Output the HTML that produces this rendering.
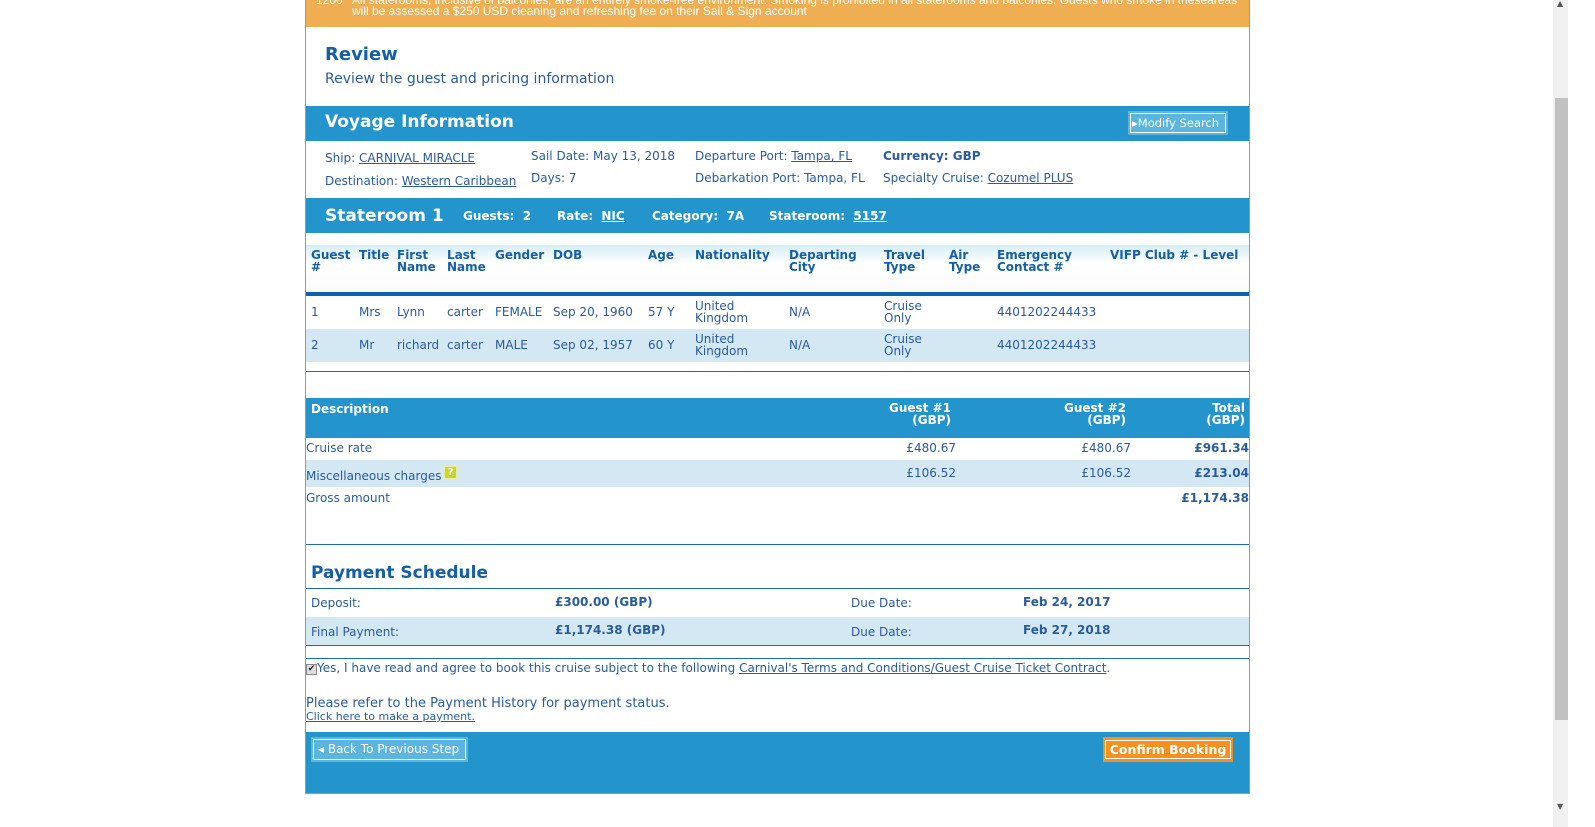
<!DOCTYPE html>
<html><head><meta charset="utf-8"><style>
*{margin:0;padding:0;box-sizing:border-box}
html,body{width:1595px;height:827px;overflow:hidden;background:#fff}
body{position:relative;font-family:"DejaVu Sans","Liberation Sans",sans-serif;font-size:12px;color:#2a5b9f}
.a{position:absolute;white-space:nowrap;line-height:14px}
.b{font-weight:bold}
.w{color:#fff}
.u{text-decoration:underline}
.bar{position:absolute;left:306px;width:943px;background:#2394cc}
.ln{position:absolute;left:306px;width:943px;height:1px;background:#1a6db5}
.lb{position:absolute;left:306px;width:943px;background:#d3e8f3}
.h{color:#155ea8;font-weight:bold;line-height:12px}
</style></head><body>
<div style="position:absolute;left:305px;top:0;width:945px;height:794px;border:1px solid #999;border-top:none"></div>
<div style="position:absolute;left:306px;top:0;width:943px;height:27px;background:#f0ae52"></div>
<div class="a w" style="left:316px;top:-5px;font-family:'Liberation Sans',sans-serif;font-size:12px;line-height:11px">1200 &nbsp; All staterooms, inclusive of balconies, are an entirely smoke-free environment. Smoking is prohibited in all staterooms and balconies. Guests who smoke in theseareas<br><span style="padding-left:36px">will be assessed a $250 USD cleaning and refreshing fee on their Sail &amp; Sign account</span></div>

<div class="a b" style="left:325px;top:45px;font-size:18px;line-height:20px;color:#155ea8">Review</div>
<div class="a" style="left:325px;top:71px;font-size:14px;line-height:16px">Review the guest and pricing information</div>

<div class="bar" style="top:106px;height:35px"></div>
<div class="a b w" style="left:325px;top:112px;font-size:17px;line-height:20px">Voyage Information</div>
<div class="a w" style="left:1128px;top:111px;width:100px;height:24px;background:#5ab5e0;padding:2px"><div style="border:1px solid #fff;height:20px;font-size:11.5px;line-height:18px;padding-left:1px;overflow:hidden">&#9656;Modify Search</div></div>

<div class="a" style="left:325px;top:151px">Ship: <span class="u">CARNIVAL MIRACLE</span></div>
<div class="a" style="left:325px;top:174px">Destination: <span class="u">Western Caribbean</span></div>
<div class="a" style="left:531px;top:149px">Sail Date: May 13, 2018</div>
<div class="a" style="left:531px;top:171px">Days: 7</div>
<div class="a" style="left:695px;top:149px">Departure Port: <span class="u">Tampa, FL</span></div>
<div class="a" style="left:695px;top:171px">Debarkation Port: Tampa, FL</div>
<div class="a b" style="left:883px;top:149px">Currency: GBP</div>
<div class="a" style="left:883px;top:171px">Specialty Cruise: <span class="u">Cozumel PLUS</span></div>

<div class="bar" style="top:198px;height:35px"></div>
<div class="a b w" style="left:325px;top:206px;font-size:17px;line-height:20px">Stateroom 1</div>
<div class="a b w" style="left:463px;top:209px">Guests: &nbsp;2</div>
<div class="a b w" style="left:557px;top:209px">Rate: &nbsp;<span class="u">NIC</span></div>
<div class="a b w" style="left:652px;top:209px">Category: &nbsp;7A</div>
<div class="a b w" style="left:769px;top:209px">Stateroom: &nbsp;<span class="u">5157</span></div>

<div style="position:absolute;left:306px;top:245px;width:943px;height:47px;background:linear-gradient(#d6edf6,#fff 40%,#fafafa)"></div>
<div style="position:absolute;left:306px;top:292px;width:943px;height:4px;background:#0b62ad"></div>
<div class="a h" style="left:311px;top:249px">Guest<br>#</div>
<div class="a h" style="left:359px;top:249px">Title</div>
<div class="a h" style="left:397px;top:249px">First<br>Name</div>
<div class="a h" style="left:447px;top:249px">Last<br>Name</div>
<div class="a h" style="left:495px;top:249px">Gender</div>
<div class="a h" style="left:553px;top:249px">DOB</div>
<div class="a h" style="left:648px;top:249px">Age</div>
<div class="a h" style="left:695px;top:249px">Nationality</div>
<div class="a h" style="left:789px;top:249px">Departing<br>City</div>
<div class="a h" style="left:884px;top:249px">Travel<br>Type</div>
<div class="a h" style="left:949px;top:249px">Air<br>Type</div>
<div class="a h" style="left:997px;top:249px">Emergency<br>Contact #</div>
<div class="a h" style="left:1110px;top:249px">VIFP Club # - Level</div>

<div class="lb" style="top:329px;height:33px"></div>
<div class="a" style="left:311px;top:305px">1</div><div class="a" style="left:359px;top:305px">Mrs</div><div class="a" style="left:397px;top:305px">Lynn</div><div class="a" style="left:447px;top:305px">carter</div><div class="a" style="left:495px;top:305px">FEMALE</div><div class="a" style="left:553px;top:305px">Sep 20, 1960</div><div class="a" style="left:648px;top:305px">57 Y</div><div class="a" style="left:695px;top:300px;line-height:12px">United<br>Kingdom</div><div class="a" style="left:789px;top:305px">N/A</div><div class="a" style="left:884px;top:300px;line-height:12px">Cruise<br>Only</div><div class="a" style="left:997px;top:305px">4401202244433</div>
<div class="a" style="left:311px;top:338px">2</div><div class="a" style="left:359px;top:338px">Mr</div><div class="a" style="left:397px;top:338px">richard</div><div class="a" style="left:447px;top:338px">carter</div><div class="a" style="left:495px;top:338px">MALE</div><div class="a" style="left:553px;top:338px">Sep 02, 1957</div><div class="a" style="left:648px;top:338px">60 Y</div><div class="a" style="left:695px;top:333px;line-height:12px">United<br>Kingdom</div><div class="a" style="left:789px;top:338px">N/A</div><div class="a" style="left:884px;top:333px;line-height:12px">Cruise<br>Only</div><div class="a" style="left:997px;top:338px">4401202244433</div>
<div class="ln" style="top:371px"></div>

<div class="bar" style="top:398px;height:40px"></div>
<div class="a b w" style="left:311px;top:402px">Description</div>
<div class="a b w" style="left:851px;width:100px;text-align:right;top:402px;line-height:12px">Guest #1<br>(GBP)</div>
<div class="a b w" style="left:1026px;width:100px;text-align:right;top:402px;line-height:12px">Guest #2<br>(GBP)</div>
<div class="a b w" style="left:1145px;width:100px;text-align:right;top:402px;line-height:12px">Total<br>(GBP)</div>
<div class="lb" style="top:460px;height:27px"></div>
<div class="a" style="left:306px;top:469px">Miscellaneous charges</div>
<div style="position:absolute;left:443px;top:465px;width:15px;height:15px;background:#c6d531;border:2px solid #e8ef9a;color:#fff;font-size:10px;line-height:11px;text-align:center;font-weight:bold">?</div>
<div class="a" style="left:306px;top:441px">Cruise rate</div>
<div class="a" style="left:856px;width:100px;text-align:right;top:441px">£480.67</div>
<div class="a" style="left:1031px;width:100px;text-align:right;top:441px">£480.67</div>
<div class="a b" style="left:1149px;width:100px;text-align:right;top:441px">£961.34</div>
<div class="a" style="left:856px;width:100px;text-align:right;top:466px">£106.52</div>
<div class="a" style="left:1031px;width:100px;text-align:right;top:466px">£106.52</div>
<div class="a b" style="left:1149px;width:100px;text-align:right;top:466px">£213.04</div>
<div class="a" style="left:306px;top:491px">Gross amount</div>
<div class="a b" style="left:1149px;width:100px;text-align:right;top:491px">£1,174.38</div>
<div class="ln" style="top:544px"></div>

<div class="a b" style="left:311px;top:563px;font-size:17px;line-height:20px;color:#155ea8">Payment Schedule</div>
<div class="ln" style="top:588px"></div>
<div class="lb" style="top:617px;height:28px"></div>
<div class="ln" style="top:645px"></div>
<div class="ln" style="top:658px"></div>
<div class="a" style="left:311px;top:596px">Deposit:</div>
<div class="a b" style="left:555px;top:595px">£300.00 (GBP)</div>
<div class="a" style="left:851px;top:596px">Due Date:</div>
<div class="a b" style="left:1023px;top:595px">Feb 24, 2017</div>
<div class="a" style="left:311px;top:625px">Final Payment:</div>
<div class="a b" style="left:555px;top:623px">£1,174.38 (GBP)</div>
<div class="a" style="left:851px;top:625px">Due Date:</div>
<div class="a b" style="left:1023px;top:623px">Feb 27, 2018</div>

<div class="a" style="left:306px;top:661px"><span style="display:inline-block;width:11px;height:11px;border:1px solid #888;background:#ddd;font-size:9px;line-height:9px;color:#222;text-align:center;vertical-align:1px">✔</span>Yes, I have read and agree to book this cruise subject to the following <span class="u">Carnival's Terms and Conditions/Guest Cruise Ticket Contract</span>.</div>
<div class="a" style="left:306px;top:697px;font-size:13px">Please refer to the Payment History for payment status.</div>
<div class="a u" style="left:306px;top:710px;font-size:11px;line-height:13px">Click here to make a payment.</div>

<div class="bar" style="top:732px;height:61px"></div>
<div class="a w" style="left:311px;top:737px;width:157px;height:25px;background:#5ab5e0;padding:2px"><div style="border:1px solid #fff;height:21px;line-height:19px;padding-left:4px">&#9666; Back To Previous Step</div></div>
<div class="a w b" style="left:1103px;top:737px;width:130px;height:25px;background:#f7901e;padding:3px 2px"><div style="border:1px solid #fff;height:19px;line-height:17px;text-align:center;font-size:12.5px">Confirm Booking</div></div>

<div style="position:absolute;left:1553px;top:0;width:15px;height:827px;background:#f0f0f0"></div>
<div style="position:absolute;left:1555px;top:98px;width:13px;height:622px;background:#c1c1c1"></div>
<div class="a" style="left:1557px;top:-3px;font-size:8px;color:#555">▲</div>
<div class="a" style="left:1557px;top:800px;font-size:8px;color:#555">▼</div>
</body></html>
